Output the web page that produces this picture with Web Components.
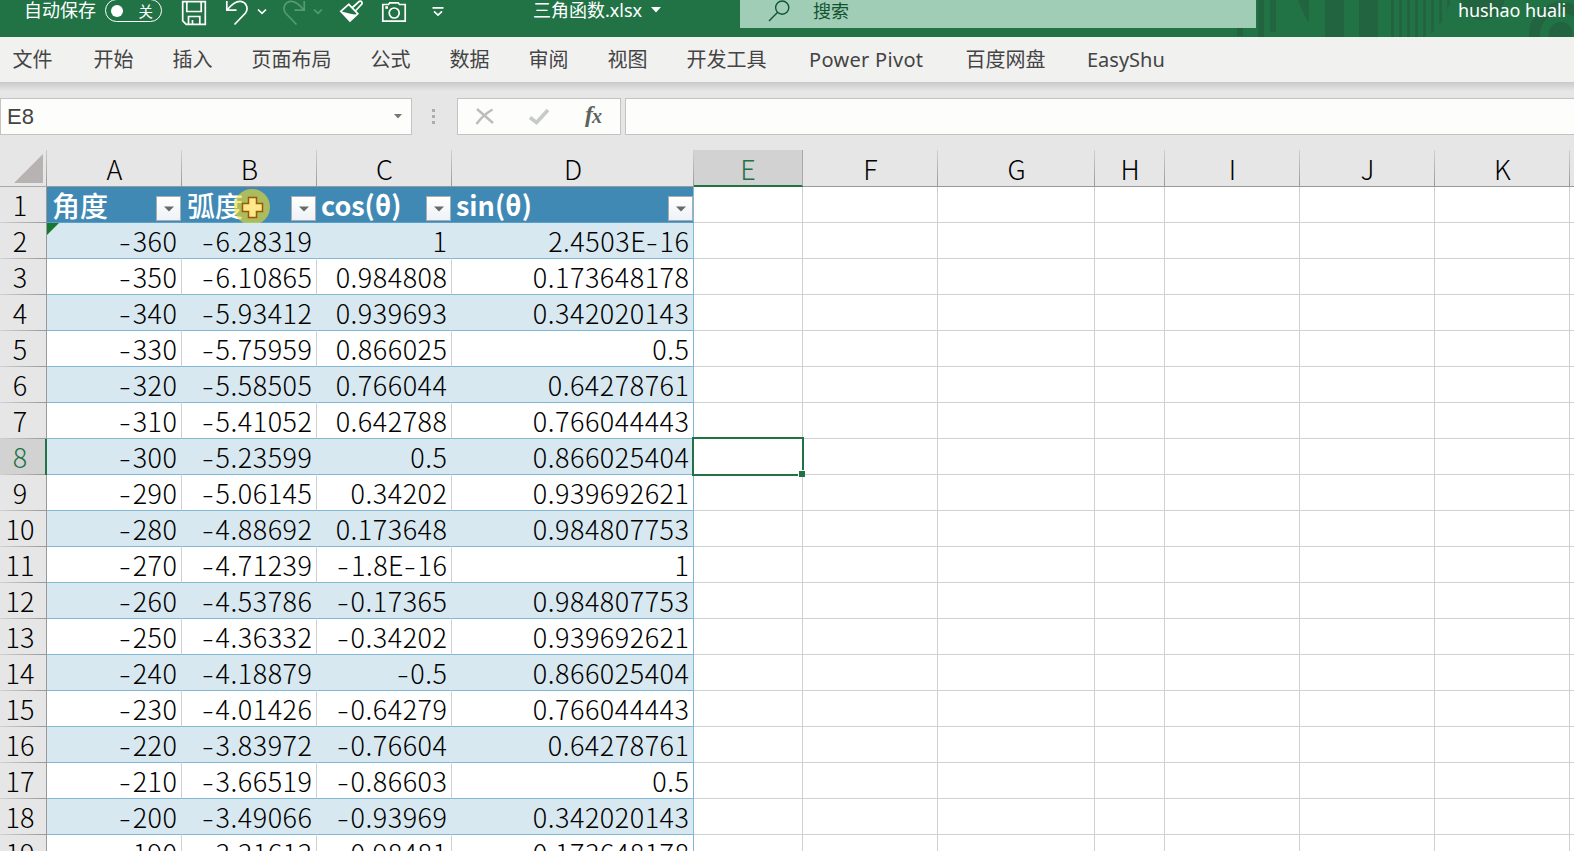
<!DOCTYPE html>
<html lang="zh-CN">
<head>
<meta charset="utf-8">
<title>三角函数.xlsx</title>
<style>
  html, body { margin: 0; height: 100%; overflow: hidden; background: #e6e6e6; }
  body {
    width: 1574px; height: 851px;
    font-family: "Noto Sans", "Noto Sans CJK SC", sans-serif;
  }
</style>
</head>
<body>
<excel-window>
  <excel-titlebar slot="title" file="三角函数.xlsx" user="hushao huali"></excel-titlebar>
  <excel-ribbon slot="ribbon"></excel-ribbon>
  <excel-formula-bar slot="formula" cell="E8"></excel-formula-bar>
  <excel-sheet slot="sheet" active="E8"></excel-sheet>
</excel-window>

<script>
class ExcelWindow extends HTMLElement {
  constructor() {
    super();
    this.attachShadow({ mode: 'open' }).innerHTML = `
<style>
  :host { display: flex; flex-direction: column; width: 1574px; height: 851px; overflow: hidden; background: #e6e6e6; }
</style>
<slot name="title"></slot>
<slot name="ribbon"></slot>
<slot name="formula"></slot>
<slot name="sheet"></slot>
`;
  }
}
customElements.define('excel-window', ExcelWindow);

// Every glyph is 37px tall so it can sit in the title bar without vertical offsets.
const icons = {
  save: [26, '<path d="M1.7 1.7H24.3V24.3H5.2L1.7 20.8Z M5.8 1.7V11.5H20.2V1.7 M7.5 24.3V16.5H18.8V24.3 M11.5 20V24"/>'],
  undo: [24, '<path d="M1.8 1V10.2H11.5 M2.2 9.8C7 4 11 1 15.5 1.4C21 2 24 8 20.5 13L9.5 24.5"/>'],
  redo: [24, '<path d="M22.2 1V10.2H12.5 M21.8 9.8C17 4 13 1 8.5 1.4C3 2 0 8 3.5 13L14.5 24.5"/>'],
  chevron: [10, '<path d="M1 9.5L5 13.3L9 9.5"/>'],
  brush: [26, '<path d="M9.700 4.300L1.800 11.300L11 21L18.800 13.700Z M13.500 7.500L20.300 1.300Q23.600 .6 23 3.800L16.800 10.500"/><path d="M1.500 11.300L12.500 14L17.500 14.800L11 21.500Z" fill="currentColor" stroke="none"/>'],
  camera: [26, '<path d="M1.8 4.500H7.500L8.800 2.800H17.200L18.500 4.500H24.2V21.2H1.8Z"/><circle cx="13.2" cy="13" r="5"/><path d="M4.300 7.500H7" stroke-width="2.600"/>'],
  more: [12, '<path d="M0.5 7.8H11.5 M2 11.3L6 15L10 11.3"/>'],
  search: [22, '<circle cx="14.2" cy="7.6" r="6.6"/><path d="M9.4 12.4L1 21"/>']
};

class ExcelIcon extends HTMLElement {
  constructor() {
    super();
    this.attachShadow({ mode: 'open' });
  }
  connectedCallback() {
    const [w, body] = icons[this.getAttribute('name')];
    this.shadowRoot.innerHTML = `
<style>
  :host { display: block; flex: none; height: 37px; }
  svg { display: block; fill: none; stroke: currentColor; stroke-width: var(--stroke, 1.7); }
</style>
<svg width="${w}" height="37" viewBox="0 0 ${w} 37">${body}</svg>
`;
  }
}
customElements.define('excel-icon', ExcelIcon);

class ExcelTitlebar extends HTMLElement {
  constructor() {
    super();
    this.attachShadow({ mode: 'open' });
  }
  connectedCallback() {
    this.shadowRoot.innerHTML = `
<style>
  :host {
    display: flex; position: relative; flex: none; height: 37px; overflow: hidden;
    background: #217346; color: #fff; font-size: 18px; line-height: 20px; white-space: nowrap;
  }
  .pattern { position: absolute; right: 0; top: 0; fill: #226440; }
  .label { width: 81px; padding-left: 24px; }
  .toggle {
    box-sizing: border-box; display: flex; align-items: center; justify-content: space-between;
    width: 57px; height: 23px; margin-top: -1px; padding: 0 8px 0 5px;
    border: 1.5px solid #fff; border-radius: 12px; font-size: 14.5px;
  }
  .toggle i { width: 12px; height: 12px; border-radius: 50%; background: #fff; }
  .quick { display: flex; width: 371px; }
  .off { color: #569a73; }
  .file { display: flex; width: 207px; }
  .file svg { margin: 7px 0 0 9px; }
  .search {
    display: flex; box-sizing: border-box; width: 516px; height: 28px; padding-left: 28px;
    background: #a0cdb6; color: #135430; overflow: hidden; position: relative;
  }
  .search span { margin-left: 23px; padding-top: 1px; }
  .user { position: relative; margin-left: 202px; letter-spacing: -0.1px; }
</style>
<svg class="pattern" width="340" height="37" viewBox="1234 0 340 37">
  <path d="M1237 28h6v8h-6z M1258 0h6v37h-6z M1270 0h6v32h-6z M1298 0h11v23Q1302 12 1298 0z M1325 0h19v37h-19z M1359 0h19v37h-19z"/>
  <path d="M1391 0h3v37h-3z M1399 0h3v37h-3z M1407 0h3v37h-3z M1415 0h3v37h-3z M1423 0h3v37h-3z M1431 0h3v31l-3 3z M1439 0h3v21l-3 4z M1447 0h3v4l-3 6z"/>
  <circle cx="1482.500" cy="-2" r="22"/>
  <path fill-rule="evenodd" d="M1529 34a32 32 0 0 1 64 0v8h-64z M1540 34a21 21 0 0 1 42 0v8h-42z"/>
  <circle cx="1560.700" cy="34" r="12"/>
</svg>
<div class="label">自动保存</div>
<div class="toggle"><i></i><span>关</span></div>
<div class="quick">
  <excel-icon name="save" style="margin-left:19px"></excel-icon>
  <excel-icon name="undo" style="margin-left:18px"></excel-icon>
  <excel-icon name="chevron" style="margin-left:8px"></excel-icon>
  <excel-icon name="redo" class="off" style="margin-left:15px"></excel-icon>
  <excel-icon name="chevron" class="off" style="margin-left:7px"></excel-icon>
  <excel-icon name="brush" style="margin-left:16px"></excel-icon>
  <excel-icon name="camera" style="margin-left:16px"></excel-icon>
  <excel-icon name="more" style="margin-left:25px"></excel-icon>
</div>
<div class="file"><span>${this.getAttribute('file')}</span>
  <svg width="10" height="6"><path d="M0 0H10L5 5.500Z" fill="#fff"/></svg>
</div>
<div class="search"><excel-icon name="search" style="--stroke:1.4"></excel-icon><span>搜索</span></div>
<div class="user">${this.getAttribute('user')}</div>
`;
  }
}
customElements.define('excel-titlebar', ExcelTitlebar);

// label, width of the tab, letter spacing
const tabs = [
  ['文件', 81], ['开始', 79], ['插入', 79], ['页面布局', 119], ['公式', 79],
  ['数据', 79], ['审阅', 79], ['视图', 79], ['开发工具', 122.5],
  ['Power Pivot', 156.5, 0.3], ['百度网盘', 121.5], ['EasyShu', 100]
];

class ExcelRibbon extends HTMLElement {
  constructor() {
    super();
    this.attachShadow({ mode: 'open' }).innerHTML = `
<style>
  :host { display: block; flex: none; height: 61px; background: linear-gradient(#c9c9c9, #e6e6e6) 0 45px / 100% 9px no-repeat; }
  nav {
    display: flex; height: 45px; padding-left: 12.5px; background: #f1f1f0;
    color: #444; font-size: 20px; line-height: 45px; white-space: nowrap;
  }
  span { flex: none; }
</style>
<nav>${tabs.map(([t, w, s]) => `<span style="width:${w}px;letter-spacing:${s || 0}px">${t}</span>`).join('')}</nav>
`;
  }
}
customElements.define('excel-ribbon', ExcelRibbon);

class ExcelFormulaBar extends HTMLElement {
  constructor() {
    super();
    this.attachShadow({ mode: 'open' });
  }
  connectedCallback() {
    this.shadowRoot.innerHTML = `
<style>
  :host { display: flex; flex: none; height: 37px; padding-bottom: 15px; }
  div { box-sizing: border-box; flex: none; height: 37px; background: #fdfdfc; border: 1px solid #c3c3c3; }
  .name {
    display: flex; align-items: center; justify-content: space-between; width: 412px; padding: 0 9px 0 6px;
    color: #444; font: 22px/35px "Liberation Sans", sans-serif;
  }
  .grip { align-self: center; margin: 0 22px 0 19px; }
  .tools { display: flex; width: 164px; margin-right: 4px; }
  .value { flex: 1; border-right: 0; }
</style>
<div class="name"><span>${this.getAttribute('cell')}</span>
  <svg width="8" height="5"><path d="M0 0H8L4 4.500Z" fill="#777"/></svg>
</div>
<svg class="grip" width="4" height="16" fill="#b0acac"><path d="M1 0h3v3h-3z M1 6h3v3h-3z M1 12h3v3h-3z"/></svg>
<div class="tools">
  <svg width="162" height="35" viewBox="0 0 162 35" fill="none">
    <path d="M19 10L35 24 M34.500 10.500Q25 16 18.500 25" stroke="#bdbdbd" stroke-width="2.500"/>
    <path d="M72 18.500L78.500 23.500L90 11" stroke="#c6cbc6" stroke-width="3.600"/>
    <g fill="#5c625c" font-family="Liberation Serif, serif" font-style="italic" font-weight="bold">
      <text x="127" y="22.500" font-size="24">f</text><text x="134" y="23.500" font-size="20">x</text>
    </g>
  </svg>
</div>
<div class="value"></div>
`;
  }
}
customElements.define('excel-formula-bar', ExcelFormulaBar);

const columns = [
  ['A', 135], ['B', 135], ['C', 135], ['D', 242], ['E', 109], ['F', 135],
  ['G', 157], ['H', 70], ['I', 135], ['J', 135], ['K', 135], ['', 5]
];
const rows = [
  ['角度', '弧度', 'cos(θ)', 'sin(θ)'],
  ['-360', '-6.28319', '1', '2.4503E-16'],
  ['-350', '-6.10865', '0.984808', '0.173648178'],
  ['-340', '-5.93412', '0.939693', '0.342020143'],
  ['-330', '-5.75959', '0.866025', '0.5'],
  ['-320', '-5.58505', '0.766044', '0.64278761'],
  ['-310', '-5.41052', '0.642788', '0.766044443'],
  ['-300', '-5.23599', '0.5', '0.866025404'],
  ['-290', '-5.06145', '0.34202', '0.939692621'],
  ['-280', '-4.88692', '0.173648', '0.984807753'],
  ['-270', '-4.71239', '-1.8E-16', '1'],
  ['-260', '-4.53786', '-0.17365', '0.984807753'],
  ['-250', '-4.36332', '-0.34202', '0.939692621'],
  ['-240', '-4.18879', '-0.5', '0.866025404'],
  ['-230', '-4.01426', '-0.64279', '0.766044443'],
  ['-220', '-3.83972', '-0.76604', '0.64278761'],
  ['-210', '-3.66519', '-0.86603', '0.5'],
  ['-200', '-3.49066', '-0.93969', '0.342020143'],
  ['-190', '-3.31613', '-0.98481', '0.173648178']
];

class ExcelFilterButton extends HTMLElement {
  constructor() {
    super();
    this.attachShadow({ mode: 'open' }).innerHTML = `
<style>
  :host {
    box-sizing: border-box; display: flex; flex: none; align-items: center; justify-content: center;
    width: 25px; height: 25px; border: 1px solid #a9adb2; background: linear-gradient(#fff, #eef1f6);
  }
</style>
<svg width="10" height="6"><path d="M0 .5H10L5 5.500Z" fill="#666b66"/></svg>
`;
  }
}
customElements.define('excel-filter-button', ExcelFilterButton);

class ExcelSheet extends HTMLElement {
  constructor() {
    super();
    this.attachShadow({ mode: 'open' });
  }
  cell(row, col) {
    const value = (rows[row][col] || '').replace(/-/g, '<s>-</s>');
    const active = this.getAttribute('active') === columns[col][0] + (row + 1);
    let cls = 'cell';
    if (col < 4) cls += row === 0 ? ' head' : row % 2 ? ' data band' : ' data';
    if (row === 0 && col < 2) cls += ' han';
    if (col === 3) cls += ' last';
    let extra = '';
    if (row === 0 && col < 4) extra = '<excel-filter-button></excel-filter-button>';
    if (row === 0 && col === 1) extra += this.pointer();
    if (row === 1 && col === 0) extra = '<b class="flag"></b>';
    if (active) extra = '<div class="active"><b></b></div>';
    return `<div class="${cls}"><span>${value}</span>${extra}</div>`;
  }
  pointer() {
    return `<svg class="pointer" width="38" height="38" viewBox="0 0 38 38">
      <circle cx="19" cy="19" r="18" fill="#f0dc28" fill-opacity=".6"/>
      <path d="M15.500 9.500H23.500V15.500H29.500V23.500H23.500V29.500H15.500V23.500H9.500V15.500H15.500Z" fill="#ffe78b" stroke="#9c5a00" stroke-width="1.500"/>
    </svg>`;
  }
  connectedCallback() {
    const active = this.getAttribute('active');
    const letter = active[0];
    const number = +active.slice(1);
    this.shadowRoot.innerHTML = `
<style>
  :host {
    display: grid; flex: none; height: 701px; overflow: hidden;
    grid-template-columns: 47px ${columns.map((c) => c[1] + 'px').join(' ')};
    grid-template-rows: 37px; grid-auto-rows: 36px;
    font-family: "Noto Sans CJK SC", sans-serif; font-weight: 300; font-size: 27px;
    line-height: 36px; color: #000; white-space: nowrap;
  }
  .corner, .col, .row, .cell { box-sizing: border-box; position: relative; min-width: 0; }
  .corner { border-bottom: 1px solid #aaa; background: linear-gradient(#ccc, #999) right / 1px 100% no-repeat; }
  .corner svg { display: block; margin: 4px 0 0 14px; }
  .col {
    text-align: center; padding-top: 1px; border-bottom: 1px solid #999;
    background: linear-gradient(#d0d0d0, #999) right / 1px 100% no-repeat;
  }
  .col.on { background: #d2d2d2; color: #217346; border-right: 1px solid #aaa; border-bottom: 2px solid #217346; }
  .row {
    border-right: 1px solid #999; text-align: center; padding-right: 6px;
    background: linear-gradient(90deg, #d0d0d0, #999) bottom / 100% 1px no-repeat;
  }
  .row.on { background-color: #d2d2d2; color: #217346; border-right: 2px solid #217346; padding-right: 5px; }
  .cell { background: #fff; border-right: 1px solid #d0d0d0; border-bottom: 1px solid #d0d0d0; }
  .data { text-align: right; padding-right: 3.5px; border-bottom-color: #7fb7d5; letter-spacing: 0.5px; }
  .band { background: #d8e8f0; border-right-color: #d8e8f0; }
  .head {
    display: flex; justify-content: space-between; padding-left: 4px;
    background: #4189b5; border-color: #4189b5; border-bottom-color: #5aa0c8; color: #fff; font-weight: 700;
  }
  .head.han { padding-left: 5px; font-size: 28px; font-weight: 500; }
  .head excel-filter-button { margin-top: 9px; }
  .last { border-right-color: #7fb7d5; }
  s { display: inline-block; width: 14px; margin-right: -.5px; text-decoration: none; text-align: left; transform: scaleX(1.3); transform-origin: 0 50%; }
  .flag { position: absolute; left: 0; top: 0; border: 6px solid; border-color: #15792f transparent transparent #15792f; }
  .pointer { position: absolute; left: 51px; top: 1px; }
  .active { position: absolute; z-index: 1; left: -2px; top: -2px; width: 108px; height: 35px; border: 2px solid #217346; }
  .active b { position: absolute; right: -3px; bottom: -3px; width: 6px; height: 6px; background: #217346; border: solid #fff; border-width: 1px 0 0 1px; }
</style>
<div class="corner"><svg width="29" height="29"><path d="M29 0V29H0Z" fill="#b7b3b3"/></svg></div>
${columns.map(([c]) => `<div class="col${c === letter ? ' on' : ''}">${c}</div>`).join('')}
${rows.map((_, r) => `<div class="row${r + 1 === number ? ' on' : ''}">${r + 1}</div>` +
    columns.map((_, c) => this.cell(r, c)).join('')).join('')}
`;
  }
}
customElements.define('excel-sheet', ExcelSheet);
</script>
</body>
</html>
